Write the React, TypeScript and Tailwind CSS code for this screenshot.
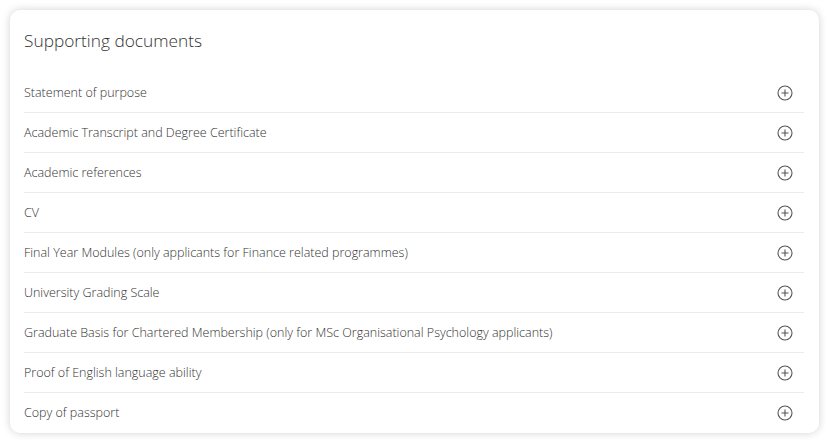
const docs = [
  'Statement of purpose',
  'Academic Transcript and Degree Certificate',
  'Academic references',
  'CV',
  'Final Year Modules (only applicants for Finance related programmes)',
  'University Grading Scale',
  'Graduate Basis for Chartered Membership (only for MSc Organisational Psychology applicants)',
  'Proof of English language ability',
  'Copy of passport',
]

function PlusCircle() {
  return (
    <svg width="16" height="16" viewBox="0 0 16 16" fill="none" stroke="#555" strokeWidth="1.1">
      <circle cx="8" cy="8" r="7" />
      <path d="M8 4.5v7M4.5 8h7" />
    </svg>
  )
}

export default function App() {
  return (
    <div className="bg-white p-[10px] font-['Open_Sans',sans-serif]">
      <div className="rounded-[10px] bg-white pl-[14px] pr-[15px] pt-[17px] shadow-[0_0_9px_rgba(0,0,0,0.18)]">
        <h2 className="mb-[18px] text-[17.3px] leading-[28px] font-light text-[#333]">Supporting documents</h2>
        <ul>
          {docs.map((d, i) => (
            <li
              key={d}
              className={
                'flex h-[40px] items-center justify-between pr-[11px] text-[12.5px] font-light text-[#333] ' +
                (i < docs.length - 1 ? 'border-b border-[#ececec]' : '')
              }
            >
              <span className="pt-px">{d}</span>
              <PlusCircle />
            </li>
          ))}
        </ul>
      </div>
    </div>
  )
}
